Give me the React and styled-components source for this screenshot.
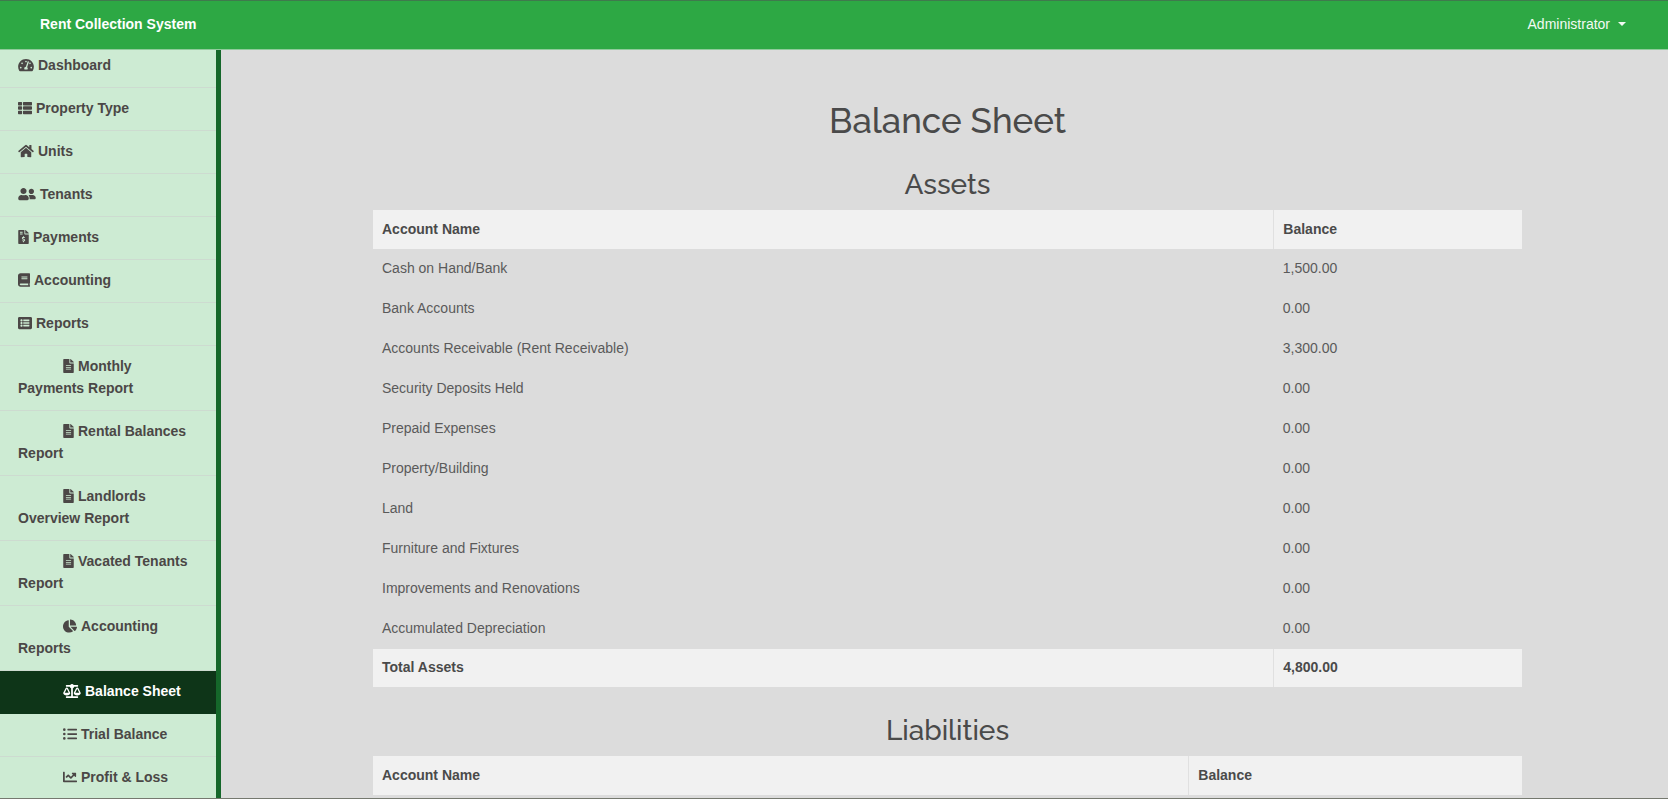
import React from "react";
import styled, { createGlobalStyle, css } from "styled-components";
import {
  FaTachometerAlt,
  FaThList,
  FaHome,
  FaUserFriends,
  FaFileInvoiceDollar,
  FaBook,
  FaListAlt,
  FaFileAlt,
  FaChartPie,
  FaBalanceScale,
  FaListUl,
  FaChartLine,
} from "react-icons/fa";

const GlobalStyle = createGlobalStyle`
  * {
    box-sizing: border-box;
  }

  body {
    margin: 0;
    background: #dcdcdc;
    color: #4a4a4a;
    font: 14px/22px "Liberation Sans", Arial, sans-serif;
  }
`;

const Page = styled.div`
  display: flex;
  flex-direction: column;
  height: 100vh;
  overflow: hidden;
  border-bottom: 1px solid #75796f;
`;

const TopBar = styled.header`
  flex: none;
  display: flex;
  align-items: center;
  justify-content: space-between;
  height: 50px;
  padding: 0 40px 2px;
  background: #2da844;
  border-top: 1px solid #3f7a4d;
  border-bottom: 1px solid #8fcb9b;
`;

const Brand = styled.a`
  color: #fff;
  font-weight: bold;
  text-decoration: none;
`;

const UserMenu = styled.button`
  display: flex;
  align-items: center;
  gap: 8px;
  padding: 0 2px;
  border: 0;
  background: none;
  color: #f2faf3;
  font: inherit;
`;

const Caret = styled.span`
  border: 4px solid transparent;
  border-top-color: currentColor;
  border-bottom: 0;
`;

const Body = styled.div`
  flex: 1;
  display: flex;
  min-height: 0;
`;

const Sidebar = styled.nav`
  flex: none;
  width: 221px;
  overflow: hidden;
  background: #cdebd3;
  border-right: 5px solid #15672a;
`;

const NavLink = styled.a`
  display: block;
  padding: 9px 18px 11px;
  border-bottom: 1px solid #cddbd0;
  color: #4b4746;
  font-weight: bold;
  text-decoration: none;
  text-indent: ${({ $nested }) => ($nested ? "45px" : "0")};

  &:first-child {
    padding-top: 4px;
  }

  svg {
    width: ${({ $iconWidth }) => $iconWidth}px;
    height: 14px;
    margin-right: 4px;
    vertical-align: -2px;
  }

  ${({ $active }) =>
    $active &&
    css`
      background: #0e3518;
      border-color: #0e3518;
      color: #fff;
    `}
`;

const Main = styled.main`
  flex: 1;
  min-width: 0;
  overflow: hidden;
  padding: 47px 146px 0 152px;
`;

const Title = styled.h1`
  margin: 0 0 22px;
  font: 500 35px/48px Raleway, Lato, sans-serif;
  text-align: center;
`;

const SectionTitle = styled.h2`
  margin: 0 0 7px;
  font: 500 28px/36px Raleway, Lato, sans-serif;
  text-align: center;
`;

const Section = styled.section`
  margin-bottom: 26px;
`;

const Ledger = styled.table`
  width: 100%;
  table-layout: fixed;
  border-collapse: collapse;
  text-align: left;
`;

const NameColumn = styled.col`
  width: ${({ $share }) => $share}%;
`;

const HeadCell = styled.th`
  height: ${({ $total }) => ($total ? 38 : 39)}px;
  padding: 0 9px 2px;
  background: #f1f1f1;

  & + & {
    border-left: 1px solid #e0e0e0;
  }
`;

const Cell = styled.td`
  height: 40px;
  padding: 0 9px 2px;
  color: #5a5a5a;
`;

const links = [
  { icon: FaTachometerAlt, label: "Dashboard", iconWidth: 16 },
  { icon: FaThList, label: "Property Type", iconWidth: 14 },
  { icon: FaHome, label: "Units", iconWidth: 16 },
  { icon: FaUserFriends, label: "Tenants", iconWidth: 18 },
  { icon: FaFileInvoiceDollar, label: "Payments", iconWidth: 11 },
  { icon: FaBook, label: "Accounting", iconWidth: 12 },
  { icon: FaListAlt, label: "Reports", iconWidth: 14 },
  { icon: FaFileAlt, label: "Monthly Payments Report", iconWidth: 11, nested: true },
  { icon: FaFileAlt, label: "Rental Balances Report", iconWidth: 11, nested: true },
  { icon: FaFileAlt, label: "Landlords Overview Report", iconWidth: 11, nested: true },
  { icon: FaFileAlt, label: "Vacated Tenants Report", iconWidth: 11, nested: true },
  { icon: FaChartPie, label: "Accounting Reports", iconWidth: 14, nested: true },
  { icon: FaBalanceScale, label: "Balance Sheet", iconWidth: 18, nested: true, active: true },
  { icon: FaListUl, label: "Trial Balance", iconWidth: 14, nested: true },
  { icon: FaChartLine, label: "Profit & Loss", iconWidth: 14, nested: true },
];

const assets = [
  ["Cash on Hand/Bank", "1,500.00"],
  ["Bank Accounts", "0.00"],
  ["Accounts Receivable (Rent Receivable)", "3,300.00"],
  ["Security Deposits Held", "0.00"],
  ["Prepaid Expenses", "0.00"],
  ["Property/Building", "0.00"],
  ["Land", "0.00"],
  ["Furniture and Fixtures", "0.00"],
  ["Improvements and Renovations", "0.00"],
  ["Accumulated Depreciation", "0.00"],
];

function AccountTable({ title, nameShare, rows = [], total }) {
  return (
    <Section>
      <SectionTitle>{title}</SectionTitle>
      <Ledger>
        <colgroup>
          <NameColumn $share={nameShare} />
          <col />
        </colgroup>
        <thead>
          <tr>
            <HeadCell scope="col">Account Name</HeadCell>
            <HeadCell scope="col">Balance</HeadCell>
          </tr>
        </thead>
        <tbody>
          {rows.map(([name, balance]) => (
            <tr key={name}>
              <Cell>{name}</Cell>
              <Cell>{balance}</Cell>
            </tr>
          ))}
        </tbody>
        {total && (
          <tfoot>
            <tr>
              <HeadCell scope="row" $total>Total {title}</HeadCell>
              <HeadCell as="td" $total><b>{total}</b></HeadCell>
            </tr>
          </tfoot>
        )}
      </Ledger>
    </Section>
  );
}

export default function App() {
  return (
    <Page>
      <GlobalStyle />
      <TopBar>
        <Brand href="#">Rent Collection System</Brand>
        <UserMenu type="button" aria-haspopup="menu">
          Administrator
          <Caret />
        </UserMenu>
      </TopBar>
      <Body>
        <Sidebar>
          {links.map(({ icon: Icon, label, iconWidth, nested, active }) => (
            <NavLink
              key={label}
              href="#"
              $iconWidth={iconWidth}
              $nested={nested}
              $active={active}
              aria-current={active ? "page" : undefined}
            >
              <Icon aria-hidden="true" />
              {label}
            </NavLink>
          ))}
        </Sidebar>
        <Main>
          <Title>Balance Sheet</Title>
          <AccountTable title="Assets" nameShare={78.4} rows={assets} total="4,800.00" />
          <AccountTable title="Liabilities" nameShare={71} />
        </Main>
      </Body>
    </Page>
  );
}
